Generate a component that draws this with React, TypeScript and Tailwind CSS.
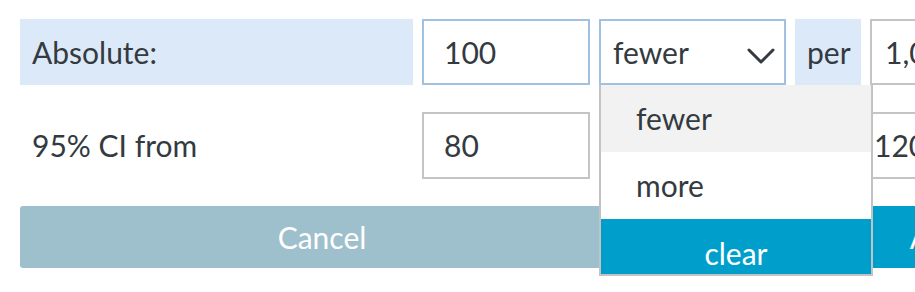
import { useState } from "react";

const OPTIONS = ["fewer", "more"];

function Field({ value, focused }: { value: string; focused?: boolean }) {
  return (
    <div
      className={`w-[168px] h-full shrink-0 flex items-center pl-[20px] border-2 bg-white ${
        focused ? "border-[#a0c1e2]" : "border-[#c4c4c4]"
      }`}
    >
      {value}
    </div>
  );
}

function Chevron() {
  return (
    <svg width="28" height="18" viewBox="0 0 28 18" className="absolute right-[11px] top-[28px]">
      <path d="M2 3 L14 15 L26 3" fill="none" stroke="#333a40" strokeWidth="3" strokeLinecap="round" strokeLinejoin="round" />
    </svg>
  );
}

export default function App() {
  const [dir] = useState("fewer");

  return (
    <div className="w-[915px] h-[292px] overflow-hidden bg-white font-['Lato',sans-serif] text-[30px] text-[#333a40]">
      <div className="w-[1300px] pl-[20px] pt-[19px] flex flex-col gap-[27px]">
        {/* row 1 */}
        <div className="flex gap-[9px] h-[66px]">
          <div className="w-[393px] shrink-0 bg-[#dce9f9] flex items-center pl-[12px]">Absolute:</div>
          <Field value="100" focused />
          <div className="relative w-[187px] shrink-0">
            <div className="h-[66px] border-2 border-[#a0c1e2] bg-white flex items-center pl-[12px]">{dir}</div>
            <Chevron />
            <div className="absolute left-0 top-full z-10 w-[274px] h-[191px] overflow-hidden border-2 border-t-0 border-[#c3c3c3] bg-white">
              {OPTIONS.map((o, i) => (
                <div
                  key={o}
                  className={`h-[67px] flex items-center pl-[35px] ${i === 0 ? "bg-[#f2f2f2]" : "bg-white"}`}
                >
                  {o}
                </div>
              ))}
              <div className="h-[68px] flex items-center justify-center bg-[#009fcb] text-white">clear</div>
            </div>
          </div>
          <div className="w-[66px] shrink-0 bg-[#dce9f9] flex items-center pl-[12px]">per</div>
          <div className="w-[168px] shrink-0 flex items-center pl-[13px] border-2 border-[#c4c4c4]">1,000</div>
        </div>

        {/* row 2 */}
        <div className="flex gap-[9px] h-[67px]">
          <div className="w-[393px] shrink-0 flex items-center pl-[12px]">95% CI from</div>
          <Field value="80" />
          <div className="w-[262px] shrink-0 flex items-center justify-center">to</div>
          <div className="w-[168px] shrink-0 flex items-center pl-[2px] border-2 border-[#c4c4c4]">120</div>
        </div>

        {/* buttons */}
        <div className="flex gap-[8px] h-[62px]">
          <button className="w-[604px] shrink-0 rounded-[3px] bg-[#9ebfcc] text-white">Cancel</button>
          <button className="w-[632px] shrink-0 rounded-[3px] bg-[#009fcb] text-white">Apply</button>
        </div>
      </div>
    </div>
  );
}
